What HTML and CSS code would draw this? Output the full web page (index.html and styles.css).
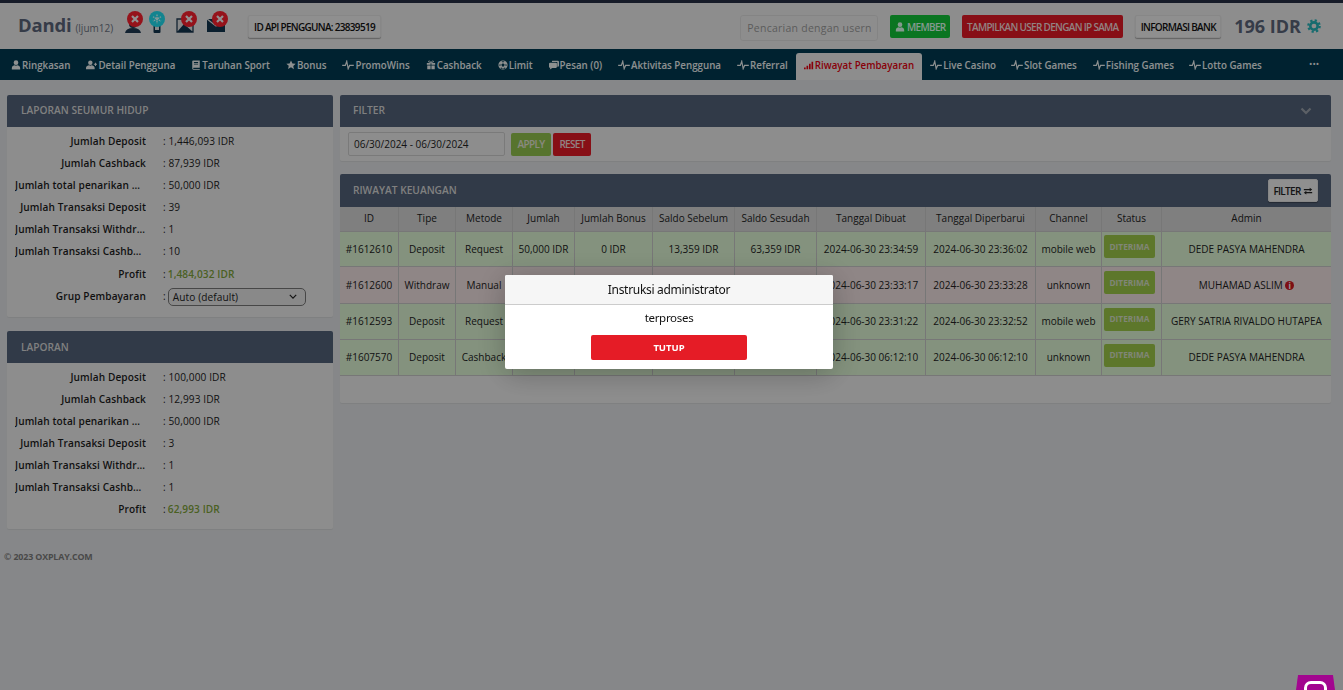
FILE: index.html
```html
<!DOCTYPE html>
<html lang="id">
<head>
<meta charset="utf-8">
<title>Riwayat Keuangan</title>
<link rel="stylesheet" href="styles.css">
</head>
<body>
<svg class="defs" width="0" height="0" aria-hidden="true">
  <symbol id="i-user" viewBox="0 0 12 12"><circle cx="6" cy="3.2" r="2.8"/><path d="M1 11.5V9.600C1 7.600 3 6.800 4.400 6.400 5.400 7.200 6.600 7.200 7.600 6.400 9 6.800 11 7.600 11 9.600v1.900z"/></symbol>
  <symbol id="i-userplus" viewBox="0 0 14 12"><circle cx="5.500" cy="3.200" r="2.800"/><path d="M0 11.500V9.600C0 7.600 2.500 6.800 3.900 6.400 4.900 7.200 6.100 7.200 7.100 6.400 8.500 6.800 11 7.600 11 9.600v1.900z"/><path d="M10 4.500h1.500V3h1.200v1.500H14v1.200h-1.300v1.500h-1.200V5.700H10z"/></symbol>
  <symbol id="i-book" viewBox="0 0 12 12"><path d="M1.500 1.500Q1.500.5 2.500.5h8v8.800H3a1 1 0 0 0 0 1.500h7.500v.8H2.500q-1 0-1-1zM3.500 2.500v1h5v-1zm0 2v1h5v-1z" fill-rule="evenodd"/></symbol>
  <symbol id="i-star" viewBox="0 0 12 12"><path d="M6 .5l1.700 3.600 3.900.5-2.900 2.700.8 3.900L6 8.800l-3.500 1.900.8-3.900L.4 4.600l3.900-.5z"/></symbol>
  <symbol id="i-pulse" viewBox="0 0 14 12"><path d="M0 6.500h3.800L5.500 1.500l1.700 9 1.700-4H14" fill="none" stroke="currentColor" stroke-width="1.400"/></symbol>
  <symbol id="i-gift" viewBox="0 0 12 12"><path d="M1 3.500h4.500v2.200H1zM6.500 3.500H11v2.200H6.500zM1.500 6.500h4v4.500h-4zM6.500 6.500h4v4.500h-4z"/><path d="M6 3.500C4 3.500 3 2.800 3 1.800 3 .6 5 .6 6 3.500 7 .6 9 .6 9 1.800 9 2.800 8 3.500 6 3.500z" fill="none" stroke="currentColor"/></symbol>
  <symbol id="i-ball" viewBox="0 0 12 12"><path fill-rule="evenodd" d="M6 .5a5.500 5.500 0 1 1 0 11 5.500 5.500 0 0 1 0-11zM6 4L4 5.500l.8 2.400h2.400L8 5.500zM4 1.800L6 3l2-1.200A5 5 0 0 0 4 1.800zM1.200 6.200l1.800 1-.2-2.700zM9.200 4.500L9 7.200l1.800-1zM4 9l-1.200.5L4.500 10.800 6 10.500zM8 9l-2 1.500 1.500.3 1.700-1.300z"/></symbol>
  <symbol id="i-comments" viewBox="0 0 12 12"><path d="M4 1h6.500Q12 1 12 2.500v4Q12 8 10.500 8H10V2.500H3.500Q3.500 1 4 1z"/><path d="M1.500 3.200h6.800Q9.500 3.200 9.500 4.500v3.700Q9.500 9.500 8.300 9.500H4L1 11.300l.5-2C.5 9.200 0 8.900 0 8V4.500Q0 3.200 1.500 3.200z"/></symbol>
  <symbol id="i-signal" viewBox="0 0 12 12"><path d="M0 9h2v2H0zM3 7h2v4H3zM6 4.500h2V11H6zM9 2h2v9H9z"/></symbol>
  <symbol id="i-swap" viewBox="0 0 12 12"><path d="M1 3.500h7V2l3 2.300-3 2.200V5H1zM11 7.200H4V5.700L1 8l3 2.200V8.700h7z"/></symbol>
  <symbol id="i-gear" viewBox="0 0 16 16"><circle cx="8" cy="8" r="4.200" fill="none" stroke="currentColor" stroke-width="3"/><circle cx="8" cy="8" r="6.500" fill="none" stroke="currentColor" stroke-width="2.600" stroke-dasharray="2.550 2.550"/></symbol>
  <symbol id="i-x" viewBox="0 0 16 16"><circle cx="8" cy="8" r="8" fill="#f8202e"/><path d="M5 5l6 6M11 5l-6 6" stroke="#f4f4f4" stroke-width="2.200"/></symbol>
</svg>

<div class="page">
  <div class="stripe"></div>
  <header class="top">
    <div class="who">
      <span class="name">Dandi</span>
      <span class="login">(ljum12)</span>
    </div>
    <div class="flags">
      <span class="flag flag-a">
        <svg class="flag-art" viewBox="0 0 18 18"><circle cx="8" cy="9" r="4" fill="#1f3a52"/><path d="M0 18q1-5 8-5t8 5z" fill="#1f3a52"/></svg>
        <svg class="flag-x"><use href="#i-x"/></svg>
      </span>
      <span class="flag flag-b">
        <svg class="flag-art" viewBox="0 0 18 18"><rect x="5.500" y="3" width="7" height="15" rx="1" fill="#12344e"/><rect x="7" y="11" width="4" height="4" fill="#e3e3e3"/></svg>
        <svg class="flag-x" viewBox="0 0 16 16"><circle cx="8" cy="8" r="8" fill="#20dcef"/><path d="M8 3.500v9M4 5.800l8 4.400M12 5.800l-8 4.400" stroke="#dff" stroke-width="1.300" stroke-dasharray="1.500 .7"/></svg>
      </span>
      <span class="flag flag-c">
        <svg class="flag-art" viewBox="0 0 18 18"><path d="M1 4h16v13H1z" fill="#e3e3e3" stroke="#1f3a52" stroke-width="1.300"/><path d="M1 17l7-8 9 8z" fill="#12344e"/></svg>
        <svg class="flag-x"><use href="#i-x"/></svg>
      </span>
      <span class="flag flag-d">
        <svg class="flag-art" viewBox="0 0 18 18"><path d="M0 4h18v13H0z" fill="#12344e"/><path d="M0 4l9 7 9-7" fill="none" stroke="#e3e3e3" stroke-width="1.300"/></svg>
        <svg class="flag-x"><use href="#i-x"/></svg>
      </span>
    </div>
    <button class="btn btn-light btn-api">ID API PENGGUNA: 23839519</button>
    <div class="spacer"></div>
    <input class="search" placeholder="Pencarian dengan username" aria-label="Pencarian">
    <button class="btn btn-green"><svg class="ic"><use href="#i-user"/></svg> MEMBER</button>
    <button class="btn btn-red">TAMPILKAN USER DENGAN IP SAMA</button>
    <button class="btn btn-light btn-bank">INFORMASI BANK</button>
    <div class="balance">196 IDR</div>
    <svg class="gear"><use href="#i-gear"/></svg>
  </header>

  <nav class="tabs">
    <a class="tab"><svg class="ic"><use href="#i-user"/></svg>Ringkasan</a>
    <a class="tab"><svg class="ic ic-d"><use href="#i-userplus"/></svg>Detail Pengguna</a>
    <a class="tab"><svg class="ic"><use href="#i-book"/></svg>Taruhan Sport</a>
    <a class="tab"><svg class="ic"><use href="#i-star"/></svg>Bonus</a>
    <a class="tab"><svg class="ic ic-w"><use href="#i-pulse"/></svg>PromoWins</a>
    <a class="tab"><svg class="ic"><use href="#i-gift"/></svg>Cashback</a>
    <a class="tab"><svg class="ic"><use href="#i-ball"/></svg>Limit</a>
    <a class="tab"><svg class="ic"><use href="#i-comments"/></svg>Pesan (0)</a>
    <a class="tab"><svg class="ic ic-w"><use href="#i-pulse"/></svg>Aktivitas Pengguna</a>
    <a class="tab"><svg class="ic ic-w"><use href="#i-pulse"/></svg>Referral</a>
    <a class="tab tab-active"><svg class="ic"><use href="#i-signal"/></svg>Riwayat Pembayaran</a>
    <a class="tab"><svg class="ic ic-w"><use href="#i-pulse"/></svg>Live Casino</a>
    <a class="tab tab-tight"><svg class="ic ic-w"><use href="#i-pulse"/></svg>Slot Games</a>
    <a class="tab"><svg class="ic ic-w"><use href="#i-pulse"/></svg>Fishing Games</a>
    <a class="tab tab-tight"><svg class="ic ic-w"><use href="#i-pulse"/></svg>Lotto Games</a>
    <span class="tab-more">•••</span>
  </nav>

  <main class="content">
    <aside class="side">
      <section class="card">
        <h2 class="card-head">LAPORAN SEUMUR HIDUP</h2>
        <div class="stats">
          <div class="stat"><span class="stat-k">Jumlah Deposit</span><span class="stat-v">: 1,446,093 IDR</span></div>
          <div class="stat"><span class="stat-k">Jumlah Cashback</span><span class="stat-v">: 87,939 IDR</span></div>
          <div class="stat"><span class="stat-k">Jumlah total penarikan dana</span><span class="stat-v">: 50,000 IDR</span></div>
          <div class="stat"><span class="stat-k">Jumlah Transaksi Deposit</span><span class="stat-v">: 39</span></div>
          <div class="stat"><span class="stat-k">Jumlah Transaksi Withdrawal</span><span class="stat-v">: 1</span></div>
          <div class="stat"><span class="stat-k">Jumlah Transaksi Cashback</span><span class="stat-v">: 10</span></div>
          <div class="stat"><span class="stat-k">Profit</span><span class="stat-v">: <b class="profit">1,484,032 IDR</b></span></div>
          <div class="stat"><span class="stat-k">Grup Pembayaran</span><span class="stat-v">: <span class="select">Auto (default)<svg class="chev" viewBox="0 0 10 6"><path d="M1 1l4 4 4-4" fill="none" stroke="currentColor" stroke-width="1.500"/></svg></span></span></div>
        </div>
      </section>
      <section class="card card-second">
        <h2 class="card-head">LAPORAN</h2>
        <div class="stats stats-short">
          <div class="stat"><span class="stat-k">Jumlah Deposit</span><span class="stat-v">: 100,000 IDR</span></div>
          <div class="stat"><span class="stat-k">Jumlah Cashback</span><span class="stat-v">: 12,993 IDR</span></div>
          <div class="stat"><span class="stat-k">Jumlah total penarikan dana</span><span class="stat-v">: 50,000 IDR</span></div>
          <div class="stat"><span class="stat-k">Jumlah Transaksi Deposit</span><span class="stat-v">: 3</span></div>
          <div class="stat"><span class="stat-k">Jumlah Transaksi Withdrawal</span><span class="stat-v">: 1</span></div>
          <div class="stat"><span class="stat-k">Jumlah Transaksi Cashback</span><span class="stat-v">: 1</span></div>
          <div class="stat"><span class="stat-k">Profit</span><span class="stat-v">: <b class="profit">62,993 IDR</b></span></div>
        </div>
      </section>
    </aside>

    <div class="main">
      <section class="card">
        <h2 class="card-head card-head-flex card-head-filter">FILTER
          <svg class="head-chev" viewBox="0 0 12 8"><path d="M1.500 1.500L6 6l4.500-4.500" fill="none" stroke="currentColor" stroke-width="2.200"/></svg>
        </h2>
        <div class="filter">
          <div class="range">06/30/2024 - 06/30/2024</div>
          <button class="btn btn-apply">APPLY</button>
          <button class="btn btn-reset">RESET</button>
        </div>
      </section>

      <section class="card card-table">
        <h2 class="card-head card-head-flex card-head-table">RIWAYAT KEUANGAN
          <button class="btn btn-light btn-filter">FILTER <svg class="ic"><use href="#i-swap"/></svg></button>
        </h2>
        <table class="grid">
          <colgroup>
            <col class="c1"><col class="c2"><col class="c3"><col class="c4"><col class="c5"><col class="c6"><col class="c7"><col class="c8"><col class="c9"><col class="c10"><col class="c11"><col class="c12">
          </colgroup>
          <thead>
            <tr><th>ID</th><th>Tipe</th><th>Metode</th><th>Jumlah</th><th>Jumlah Bonus</th><th>Saldo Sebelum</th><th>Saldo Sesudah</th><th>Tanggal Dibuat</th><th>Tanggal Diperbarui</th><th>Channel</th><th>Status</th><th>Admin</th></tr>
          </thead>
          <tbody>
            <tr class="ok r35"><td>#1612610</td><td>Deposit</td><td>Request</td><td>50,000 IDR</td><td>0 IDR</td><td>13,359 IDR</td><td>63,359 IDR</td><td>2024-06-30 23:34:59</td><td>2024-06-30 23:36:02</td><td>mobile web</td><td><span class="badge">DITERIMA</span></td><td>DEDE PASYA MAHENDRA</td></tr>
            <tr class="bad r37"><td>#1612600</td><td>Withdraw</td><td>Manual</td><td>50,000 IDR</td><td>0 IDR</td><td>63,359 IDR</td><td>13,359 IDR</td><td>2024-06-30 23:33:17</td><td>2024-06-30 23:33:28</td><td>unknown</td><td><span class="badge">DITERIMA</span></td><td>MUHAMAD ASLIM <span class="info">i</span></td></tr>
            <tr class="ok r36"><td>#1612593</td><td>Deposit</td><td>Request</td><td>50,000 IDR</td><td>0 IDR</td><td>13,359 IDR</td><td>63,359 IDR</td><td>2024-06-30 23:31:22</td><td>2024-06-30 23:32:52</td><td>mobile web</td><td><span class="badge">DITERIMA</span></td><td>GERY SATRIA RIVALDO HUTAPEA</td></tr>
            <tr class="ok r36"><td>#1607570</td><td>Deposit</td><td>Cashback</td><td>12,993 IDR</td><td>0 IDR</td><td>366 IDR</td><td>13,359 IDR</td><td>2024-06-30 06:12:10</td><td>2024-06-30 06:12:10</td><td>unknown</td><td><span class="badge">DITERIMA</span></td><td>DEDE PASYA MAHENDRA</td></tr>
          </tbody>
        </table>
      </section>
    </div>
  </main>
  <footer class="foot">© 2023 OXPLAY.COM</footer>
</div>

<div class="scrim"></div>
<div class="modal" role="dialog">
  <div class="modal-head">Instruksi administrator</div>
  <div class="modal-body">
    <p class="modal-text">terproses</p>
    <button class="modal-btn">TUTUP</button>
  </div>
</div>
<div class="chat"><span class="chat-in"></span></div>
</body>
</html>
```

FILE: styles.css
```css
* { box-sizing: border-box; }
html, body { margin: 0; height: 100%; overflow: hidden; }
body { font-family: "Open Sans", "Noto Sans", sans-serif; font-size: 11px; color: #222; background: #e0e2e4; }
.defs { position: absolute; }
button { font-family: inherit; }

.page { height: 690px; overflow: hidden; }
.stripe { height: 3px; background: #262e44; }

.top { height: 46px; background: #ececec; display: flex; align-items: flex-start; padding: 12px 22px 0 18px; }
.who { display: flex; align-items: baseline; width: 107px; margin-top: -4px; }
.name { font-size: 18.500px; font-weight: 700; color: #5a6479; line-height: 27px; letter-spacing: -.2px; }
.login { font-size: 10px; color: #6b7280; margin-left: 4px; }
.flags { display: flex; margin-top: -4px; }
.flag { position: relative; height: 22px; display: block; }
.flag-a { width: 24px; }
.flag-b { width: 27px; }
.flag-c { width: 31px; }
.flag-d { width: 41px; }
.flag-art { position: absolute; left: 0; bottom: 0; width: 18px; height: 18px; }
.flag-b .flag-art { left: -1px; }
.flag-x { position: absolute; left: 2px; top: 0; width: 16px; height: 16px; }
.flag-b .flag-x { left: 0; }
.flag-c .flag-x, .flag-d .flag-x { left: 5px; }
.spacer { flex: 1; }

.btn { border: 0; border-radius: 2px; font-size: 10px; font-weight: 600; height: 23px; padding: 0; letter-spacing: -.7px; display: inline-flex; align-items: center; justify-content: center; gap: 2px; white-space: nowrap; }
.btn-light { background: #eeeeee; color: #111; border: 1px solid #e2e2e2; box-shadow: 0 1px 1px rgba(0,0,0,.3); }
.btn-api { width: 133px; }
.btn-green { width: 60px; background: #12c437; color: #dfe; margin-left: 12px; }
.btn-red { width: 161px; background: #e11a26; color: #f3d8d8; margin-left: 12px; }
.btn-bank { width: 86px; margin-left: 12px; }
.search { width: 138px; height: 26px; border: 1px solid #ddd; border-radius: 3px; background: #ececec; padding: 0 6px; font: 10.500px "Open Sans", sans-serif; letter-spacing: .25px; }
.search::placeholder { color: #9a9a9a; }
.balance { font-size: 18px; font-weight: 700; color: #5a6479; margin-left: 13px; line-height: 25px; margin-top: -1px; }
.gear { width: 14px; height: 14px; color: #26b3b8; margin: 4px 0 0 6px; }

.ic { width: 10px; height: 10px; fill: currentColor; flex: none; }
.ic-w { width: 12px; }
.ic-d { width: 11px; }

.tabs { height: 31px; background: #003a50; display: flex; align-items: stretch; padding: 4px 0 0 3px; position: relative; }
.tab { display: flex; align-items: center; gap: 1px; padding: 0 8px 3px; color: #ecf0f1; font-size: 9.750px; font-weight: 600; white-space: nowrap; }
.tab-tight { padding-left: 7px; }
.tab-active { background: #ececec; color: #e3000f; border-radius: 3px 3px 0 0; }
.tab-more { position: absolute; left: 1309px; top: 9px; color: #ecf0f1; font-size: 9px; line-height: 12px; letter-spacing: 0; }

.content { display: flex; gap: 7px; padding: 15px 12px 0 7px; align-items: flex-start; }
.side { width: 326px; display: flex; flex-direction: column; gap: 14px; }
.main { flex: 1; display: flex; flex-direction: column; gap: 13px; min-width: 0; }
.card { background: #ececec; border-radius: 2px; box-shadow: 0 1px 1px rgba(0,0,0,.06); }
.card-head { margin: 0; height: 32px; line-height: 31px; padding: 0 14px; background: #536178; color: #d6d6d6; font-size: 10.200px; font-weight: 600; border-radius: 2px 2px 0 0; }
.card-second .card-head { line-height: 33px; }
.main .card-head { padding-left: 13px; }
.card-head-flex { display: flex; align-items: center; justify-content: space-between; }
.card-head-filter { padding-bottom: 1px; }
.card-head-table { height: 33px; padding-right: 13px; }
.head-chev { width: 12px; height: 8px; color: #9aa0aa; margin-right: 5px; }

.stats { padding: 2.700px 0 10.300px; }
.stats-short { padding-bottom: 8.300px; }
.stat { display: flex; height: 22.140px; align-items: center; }
.stat-k { width: 131px; margin-left: 8px; font-weight: 600; text-align: right; white-space: nowrap; overflow: hidden; text-overflow: ellipsis; color: #1c1c1c; font-size: 10.100px; letter-spacing: .1px; }
.stat-v { margin-left: 17px; color: #222; font-size: 10.100px; letter-spacing: .1px; display: flex; gap: 2px; align-items: center; }
.profit { font-weight: 600; color: #7ca13a; }
.select { width: 138px; height: 18px; border: 1px solid #777; border-radius: 5px; background: #e4e4e4; padding: 0 4px; display: flex; align-items: center; justify-content: space-between; color: #222; margin-top: 2px; }
.chev { width: 8px; height: 5px; margin-right: 4px; }

.filter { display: flex; align-items: center; gap: 2px; height: 34px; padding: 0 0 0 8px; }
.range { width: 157px; height: 24px; line-height: 22px; border: 1px solid #ccc; border-radius: 2px; padding: 0 5px; color: #222; font-size: 10px; font-weight: 500; margin-right: 4px; }
.btn-apply { background: #92c24d; color: #e5e5d5; width: 40px; }
.btn-reset { background: #e11a26; color: #f3d8d8; width: 38px; }

.card-table { padding-bottom: 27px; }
.btn-filter { width: 50px; color: #222; }
.grid { width: 100%; table-layout: fixed; border-collapse: collapse; font-size: 10px; }
.c1 { width: 58.500px; } .c2 { width: 57px; } .c3 { width: 57px; } .c4 { width: 62px; } .c5 { width: 78px; } .c6 { width: 82px; } .c7 { width: 82px; } .c8 { width: 109px; } .c9 { width: 110px; } .c10 { width: 66px; } .c11 { width: 60px; } .c12 { width: 169.500px; }
.grid th { background: #d4d4d4; font-weight: 400; height: 24px; border: 1px solid #c6c6c6; border-top: 0; padding: 0 0 2px; color: #222; }
.grid td { border: 1px solid #c6c6c6; padding: 0; text-align: center; white-space: nowrap; color: #222; }
.grid th:first-child, .grid td:first-child { border-left: 0; }
.grid th:last-child, .grid td:last-child { border-right: 0; }
.r35 { height: 35px; }
.r36 { height: 36px; }
.r37 { height: 37px; }
.ok { background: #dcf4d2; }
.bad { background: #eedfdf; }
.grid td:nth-child(11) { text-align: left; padding-left: 2px; }
.badge { display: inline-flex; align-items: center; justify-content: center; width: 51px; height: 23px; background: #9cc748; color: #d6dfc6; font-size: 8.300px; font-weight: 700; border-radius: 2px; padding-bottom: 1px; vertical-align: middle; margin-bottom: 4px; }
.info { display: inline-block; width: 9px; height: 9px; line-height: 9px; border-radius: 50%; background: #d01820; color: #fff; font-size: 8px; font-weight: 700; vertical-align: 0; }

.foot { margin: 21px 0 0 4px; font-size: 8.900px; font-weight: 700; color: #7a7a7a; letter-spacing: -.15px; }

.scrim { position: fixed; inset: 0; background: rgba(0,0,0,.4); }
.modal { position: fixed; left: 505px; top: 275px; width: 328px; height: 94px; background: #fff; border-radius: 2px; box-shadow: 0 5px 30px rgba(0,0,0,.25); font-family: "Noto Sans", "Open Sans", sans-serif; }
.modal-head { height: 30px; line-height: 29px; background: #f6f6f6; border-bottom: 1px solid #ccc; border-radius: 2px 2px 0 0; text-align: center; font-size: 12px; letter-spacing: -.3px; color: #111; }
.modal-body { display: flex; flex-direction: column; align-items: center; }
.modal-text { margin: 4px 0 0; font-size: 11.500px; letter-spacing: -.3px; line-height: 17px; color: #111; }
.modal-btn { width: 156px; height: 25px; margin-top: 9px; border: 0; border-radius: 2px; background: #e51c26; color: #fff; font-size: 9.500px; font-weight: 700; }
.chat { position: fixed; left: 1296px; top: 675px; width: 39px; height: 15px; background: #a2068f; clip-path: polygon(2px 0, 37px 0, 39px 15px, 0 15px); display: flex; justify-content: center; padding-top: 6px; }
.chat-in { width: 23px; height: 20px; border: 3px solid #fff; border-radius: 7px; }
```
